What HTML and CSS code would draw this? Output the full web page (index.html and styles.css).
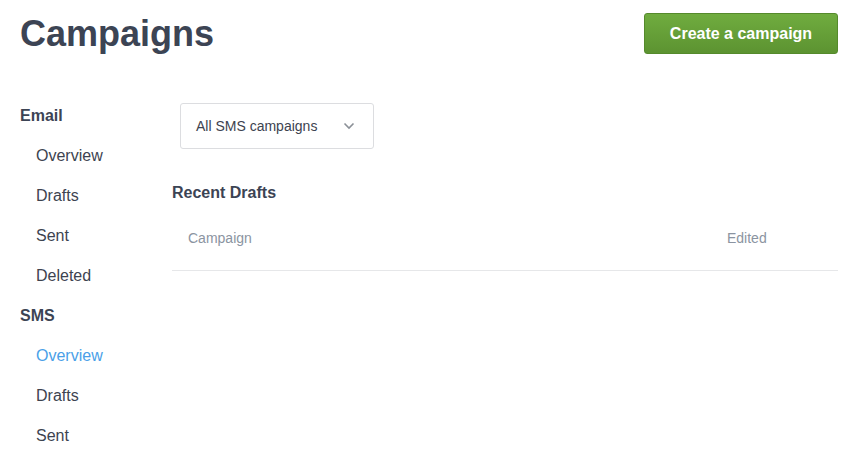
FILE: index.html
```html
<!DOCTYPE html>
<html>
	<head>
		<title>Campaigns</title>
		<link rel="stylesheet" href="styles.css">
	</head>
	<body>
		<header class="top">
			<h1>Campaigns</h1>
			<button type="button" class="create">Create a campaign</button>
		</header>
		<div class="layout">
			<nav class="sidebar">
				<div class="group">Email</div>
				<a href="#">Overview</a>
				<a href="#">Drafts</a>
				<a href="#">Sent</a>
				<a href="#">Deleted</a>
				<div class="group">SMS</div>
				<a href="#" class="active">Overview</a>
				<a href="#">Drafts</a>
				<a href="#">Sent</a>
			</nav>
			<main class="content">
				<div class="picker">
					<span>All SMS campaigns</span>
					<svg width="12" height="8" viewBox="0 0 12 8"><path d="M1.5 1.5 L6 6 L10.5 1.5" fill="none" stroke="#8b9097" stroke-width="1.6"/></svg>
				</div>
				<h2>Recent Drafts</h2>
				<div class="table-head">
					<span>Campaign</span>
					<span>Edited</span>
				</div>
			</main>
		</div>
	</body>
</html>
```

FILE: styles.css
```css
body {
	margin: 0;
	font-family: "Liberation Sans", Arial, sans-serif;
	color: #3d4451;
	background: #fff;
}

.top {
	display: flex;
	justify-content: space-between;
	align-items: center;
	padding: 13px 15px 0 20px;
	height: 41px;
}
.top h1 {
	margin: 0;
	font-size: 36px;
	line-height: 1;
	font-weight: bold;
	color: #3c4454;
}
.create {
	width: 194px;
	height: 41px;
	border: 1px solid #558a2c;
	border-radius: 3px;
	background: linear-gradient(#70ac3f, #5c9331);
	color: #fff;
	font-family: inherit;
	font-size: 16px;
	font-weight: bold;
	cursor: pointer;
}

.layout {
	display: flex;
	margin-top: 42px;
	padding-right: 15px;
}
.sidebar {
	width: 152px;
	padding-left: 20px;
	flex: none;
}
.sidebar .group,
.sidebar a {
	display: block;
	line-height: 40px;
	font-size: 16px;
}
.sidebar .group {
	font-weight: bold;
	color: #3c4454;
}
.sidebar a {
	padding-left: 16px;
	color: #3d4350;
	text-decoration: none;
}
.sidebar a.active {
	color: #4a9fe8;
}

.content {
	flex: 1;
}
.picker {
	display: flex;
	justify-content: space-between;
	align-items: center;
	box-sizing: border-box;
	width: 194px;
	height: 46px;
	margin: 7px 0 0 8px;
	padding: 0 18px 0 15px;
	border: 1px solid #dcdde0;
	border-radius: 3px;
	font-size: 14px;
	color: #3d4350;
}
h2 {
	margin: 32px 0 0;
	font-size: 16px;
	line-height: 24px;
	color: #3c4454;
}
.table-head {
	display: grid;
	grid-template-columns: 1fr 111px;
	margin-top: 23px;
	padding: 0 0 22px 16px;
	border-bottom: 1px solid #e6e7e9;
	font-size: 14px;
	line-height: 20px;
	color: #8b94a1;
}
```
